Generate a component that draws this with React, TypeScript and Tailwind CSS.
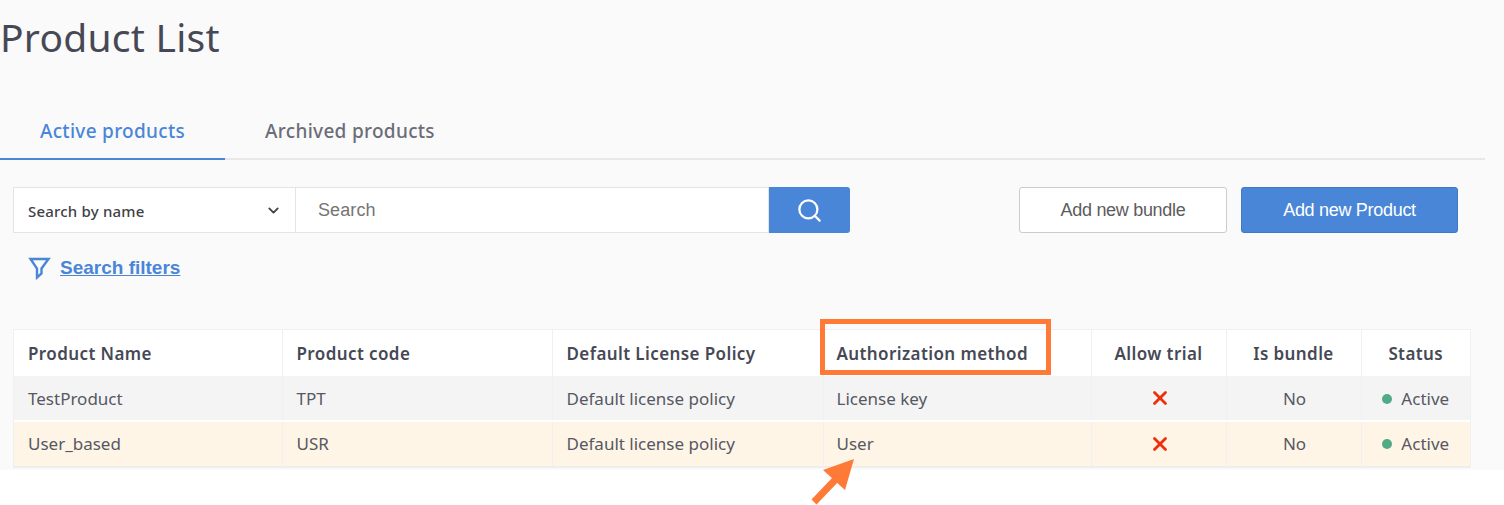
import { Search, ChevronDown, X } from "lucide-react";

const plex = "font-['Noto_Sans',sans-serif]";
const rows = [
  { name: "TestProduct", code: "TPT", auth: "License key", bg: "bg-[#f4f4f5]" },
  { name: "User_based", code: "USR", auth: "User", bg: "bg-[#fef5e7]" },
];
const th = "border-l border-[#f0f0f0] px-[14px] pt-[1px] text-[17px] font-semibold tracking-[0.4px] text-[#464955]";
const td = "border-l border-[#f0f0f0] px-[14px] text-[17px] font-normal text-[#565862]";

export default function App() {
  return (
    <div className={`relative h-[505px] w-[1504px] overflow-hidden bg-white ${plex}`}>
      <div className="h-[470px] bg-[#fafafa]">
        <h1 className="h-[100px] pt-[12px] text-[39px] leading-[50px] tracking-[0.25px] text-[#464955]">Product List</h1>
        <div className="flex h-[60px] w-[1485px] border-b-2 border-[#e8e8e8]">
          <div className="mb-[-2px] flex w-[225px] items-center justify-center border-b-2 border-[#4a86d8] pt-[5px] text-[19px] font-medium tracking-[0.3px] text-[#4a86d8]">Active products</div>
          <div className="flex w-[250px] items-center justify-center pt-[5px] text-[19px] font-medium tracking-[0.3px] text-[#6b6d78]">Archived products</div>
        </div>
        <div className="mt-[27px] flex h-[46px] pl-[13px] pr-[46px]">
          <div className="flex w-[283px] items-center justify-between border border-[#e4e4e4] bg-white pl-[14px] pr-[13px] text-[15px] font-medium tracking-[0.2px] text-[#3f4148]">
            <span className="pt-[3px]">Search by name</span>
            <ChevronDown className="h-[17px] w-[17px] text-[#3f4148]" strokeWidth={2.5} />
          </div>
          <div className="flex w-[473px] items-center border-y border-r border-[#e4e4e4] bg-white pl-[22px] font-['Liberation_Sans',sans-serif] text-[18px] tracking-[0.1px] text-[#757575]">Search</div>
          <div className="flex w-[81px] items-center justify-center rounded-r-[3px] bg-[#4a86d8]">
            <Search className="h-[27px] w-[27px] text-white" strokeWidth={2} />
          </div>
          <div className="ml-auto flex gap-[14px] font-['Liberation_Sans',sans-serif] text-[18px]">
            <div className="flex w-[208px] items-center justify-center rounded-[3px] border border-[#cccccc] bg-white tracking-[-0.3px] text-[#5c5c5c]">Add new bundle</div>
            <div className="flex w-[217px] items-center justify-center rounded-[3px] border border-[#3f78c8] bg-[#4a86d8] tracking-[-0.3px] text-white">Add new Product</div>
          </div>
        </div>
        <div className="mt-[21px] flex h-[28px] items-center gap-[9px] pl-[28px]">
          <svg className="h-[24px] w-[23px]" viewBox="0 0 23 24" fill="none" stroke="#4a86d8" strokeWidth="2.4">
            <path d="M2.5 3 H20.5 L13.5 12.5 V17.5 L9 21.5 V12.5 Z" />
          </svg>
          <a className="font-['Liberation_Sans',sans-serif] text-[19px] font-bold text-[#4a86d8] underline">Search filters</a>
        </div>
        <div className="ml-[13px] mt-[47px] w-[1458px] border-x border-t border-[#f0f0f0]">
          <table className="w-full table-fixed border-collapse">
            <colgroup>
              <col className="w-[268px]" />
              <col className="w-[270px]" />
              <col className="w-[271px]" />
              <col className="w-[268px]" />
              <col className="w-[135px]" />
              <col className="w-[135px]" />
              <col className="w-[109px]" />
            </colgroup>
            <thead>
              <tr className="h-[46px] bg-white">
                <th className={`${th} border-l-0 text-left`}>Product Name</th>
                <th className={`${th} text-left`}>Product code</th>
                <th className={`${th} text-left`}>Default License Policy</th>
                <th className={`${th} pl-[13px] text-left`}>Authorization method</th>
                <th className={`${th} text-center`}>Allow trial</th>
                <th className={`${th} text-center`}>Is bundle</th>
                <th className={`${th} text-center`}>Status</th>
              </tr>
            </thead>
            <tbody>
              {rows.map((r, i) => (
                <tr key={r.name} className={`${i === 0 ? "h-[45px]" : "h-[46px] border-y-2 border-y-[#eeeeee] border-t-white"} ${r.bg}`}>
                  <td className={`${td} border-l-0 ${i === 0 ? "pt-[1px]" : ""}`}>{r.name}</td>
                  <td className={`${td} ${i === 0 ? "pt-[1px]" : ""}`}>{r.code}</td>
                  <td className={`${td} ${i === 0 ? "pt-[1px]" : ""}`}>Default license policy</td>
                  <td className={`${td} pl-[13px] ${i === 0 ? "pt-[1px]" : ""}`}>{r.auth}</td>
                  <td className={`${td} pl-[16px]`}>
                    <X className="mx-auto h-[22px] w-[22px] text-[#ee2f0c]" strokeWidth={3} />
                  </td>
                  <td className={`${td} pl-[16px] text-center ${i === 0 ? "pt-[1px]" : ""}`}>No</td>
                  <td className={`${td} px-0 ${i === 0 ? "pt-[1px]" : ""}`}>
                    <div className="flex items-center justify-center gap-[9px]">
                      <span className="h-[10px] w-[10px] rounded-full bg-[#52ab87]" />
                      <span>Active</span>
                    </div>
                  </td>
                </tr>
              ))}
            </tbody>
          </table>
        </div>
      </div>
      <div className="absolute left-[820px] top-[319px] h-[56px] w-[231px] border-[5px] border-[#fe7a36]" />
      <svg className="absolute left-[808px] top-[458px]" width="48" height="47" viewBox="0 0 48 47">
        <path d="M46 1 L15 12 L37 32 Z" fill="#fe7a36" />
        <path d="M6 44 L28 21" stroke="#fe7a36" strokeWidth="7" fill="none" />
      </svg>
    </div>
  );
}
